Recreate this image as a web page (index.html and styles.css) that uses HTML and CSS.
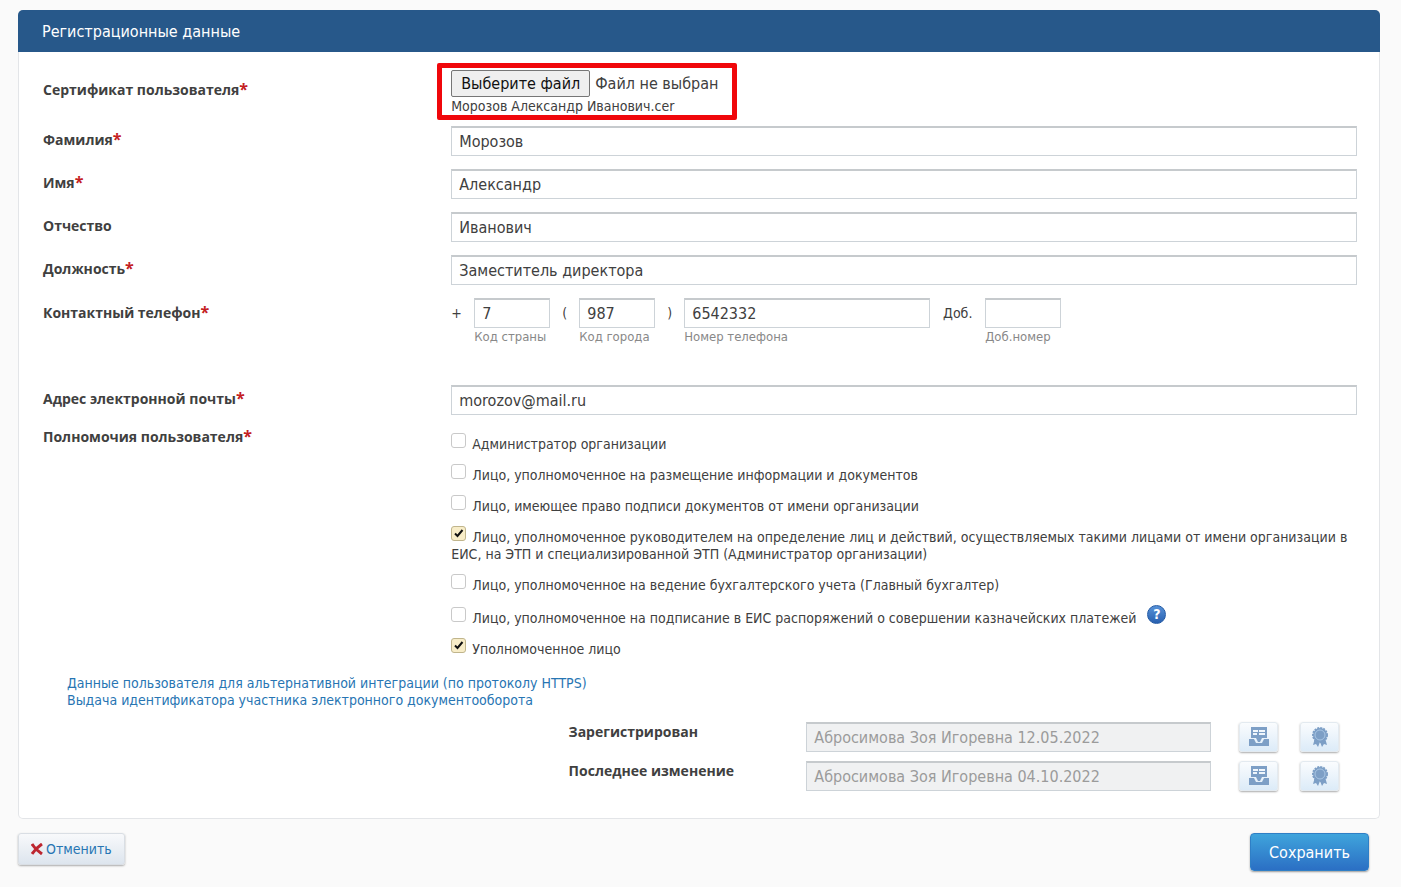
FILE: index.html
```html
<!DOCTYPE html>
<html lang="ru">
<head>
<meta charset="utf-8">
<title>Регистрационные данные</title>
<link rel="stylesheet" href="styles.css">
</head>
<body>
<svg class="sprite" aria-hidden="true">
  <symbol id="tray" viewBox="0 0 20 20">
    <path fill-rule="evenodd" d="M2 0h16v11H2zM4 3v2h5V3zM10 3v2h6V3zM4 6v2h4V6zM10 6v2h6V6z"/>
    <path d="M0 12h5l2 4h6l2-4h5v7H0z"/>
    <path d="M7 11h6l-2 4H9z"/>
  </symbol>
  <symbol id="award" viewBox="0 0 20 20">
    <path d="M5 11 3 18l3-1 2 3 2-5 2 5 2-3 3 1-2-7z"/>
    <circle cx="10" cy="8" r="7" stroke="currentColor" stroke-width="2" stroke-dasharray="2 1"/>
    <circle cx="10" cy="8" r="5" fill="none" stroke="#a9c6e4"/>
  </symbol>
</svg>
<form class="page">
  <section class="panel">
    <h1 class="panel-title">Регистрационные данные</h1>
    <div class="panel-body">
      <div class="row row-file">
        <label class="label" for="cert">Сертификат пользователя<span class="req">*</span></label>
        <div class="file-box">
          <div class="file-line">
            <input class="file-input" id="cert" type="file">
            <label class="file-button" for="cert">Выберите файл</label>
            <span class="file-status">Файл не выбран</span>
          </div>
          <div class="file-name">Морозов Александр Иванович.cer</div>
        </div>
      </div>
      <div class="row">
        <label class="label" for="surname">Фамилия<span class="req">*</span></label>
        <input class="field" id="surname" type="text" value="Морозов">
      </div>
      <div class="row">
        <label class="label" for="name">Имя<span class="req">*</span></label>
        <input class="field" id="name" type="text" value="Александр">
      </div>
      <div class="row">
        <label class="label" for="patronymic">Отчество</label>
        <input class="field" id="patronymic" type="text" value="Иванович">
      </div>
      <div class="row">
        <label class="label" for="position">Должность<span class="req">*</span></label>
        <input class="field" id="position" type="text" value="Заместитель директора">
      </div>
      <div class="row row-phone">
        <div class="label">Контактный телефон<span class="req">*</span></div>
        <div class="phone">
          <span class="sign">+</span>
          <div class="part"><input class="field" id="country" type="text" value="7"><label class="hint" for="country">Код страны</label></div>
          <span class="sign sign-mid">(</span>
          <div class="part"><input class="field" id="city" type="text" value="987"><label class="hint" for="city">Код города</label></div>
          <span class="sign sign-mid">)</span>
          <div class="part part-wide"><input class="field" id="phone" type="text" value="6542332"><label class="hint" for="phone">Номер телефона</label></div>
          <span class="sign sign-ext">Доб.</span>
          <div class="part"><input class="field" id="ext" type="text"><label class="hint" for="ext">Доб.номер</label></div>
        </div>
      </div>
      <div class="row">
        <label class="label" for="email">Адрес электронной почты<span class="req">*</span></label>
        <input class="field" id="email" type="text" value="morozov@mail.ru">
      </div>
      <div class="row row-rights">
        <div class="label">Полномочия пользователя<span class="req">*</span></div>
        <div class="rights">
          <div><input class="check" type="checkbox" id="r1"><label for="r1">Администратор организации</label></div>
          <div><input class="check" type="checkbox" id="r2"><label for="r2">Лицо, уполномоченное на размещение информации и документов</label></div>
          <div><input class="check" type="checkbox" id="r3"><label for="r3">Лицо, имеющее право подписи документов от имени организации</label></div>
          <div><input class="check" type="checkbox" id="r4" checked><label for="r4">Лицо, уполномоченное руководителем на определение лиц и действий, осуществляемых такими лицами от имени организации в ЕИС, на ЭТП и специализированной ЭТП (Администратор организации)</label></div>
          <div><input class="check" type="checkbox" id="r5"><label for="r5">Лицо, уполномоченное на ведение бухгалтерского учета (Главный бухгалтер)</label></div>
          <div class="with-help"><input class="check" type="checkbox" id="r6"><label for="r6">Лицо, уполномоченное на подписание в ЕИС распоряжений о совершении казначейских платежей</label><button class="help" type="button">?</button></div>
          <div><input class="check" type="checkbox" id="r7" checked><label for="r7">Уполномоченное лицо</label></div>
        </div>
      </div>
      <nav class="links">
        <a href="#https">Данные пользователя для альтернативной интеграции (по протоколу HTTPS)</a>
        <a href="#edo">Выдача идентификатора участника электронного документооборота</a>
      </nav>
      <div class="audit">
        <label class="label" for="created">Зарегистрирован</label>
        <input class="field" id="created" type="text" value="Абросимова Зоя Игоревна 12.05.2022" disabled>
        <button class="icon-button" type="button" aria-label="Журнал"><svg class="icon"><use href="#tray"/></svg></button>
        <button class="icon-button" type="button" aria-label="Подпись"><svg class="icon"><use href="#award"/></svg></button>
        <label class="label" for="changed">Последнее изменение</label>
        <input class="field" id="changed" type="text" value="Абросимова Зоя Игоревна 04.10.2022" disabled>
        <button class="icon-button" type="button" aria-label="Журнал"><svg class="icon"><use href="#tray"/></svg></button>
        <button class="icon-button" type="button" aria-label="Подпись"><svg class="icon"><use href="#award"/></svg></button>
      </div>
    </div>
  </section>
  <div class="actions">
    <button class="cancel" type="button"><svg class="cross" viewBox="0 0 12 12"><path d="M1 1q3 5 10 10M11 1Q5 5 1 11"/></svg>Отменить</button>
    <button class="save" type="submit">Сохранить</button>
  </div>
</form>
</body>
</html>
```
FILE: styles.css
```css
* { box-sizing: border-box; }
body {
  margin: 0;
  background: #fafafa;
  color: #404040;
  font: 14px/17px "DejaVu Sans Condensed", "Open Sans", sans-serif;
}
button, input { font: inherit; }
.sprite { position: absolute; width: 0; height: 0; }

.page { padding: 10px 21px 16px 18px; }
.panel {
  background: #fff;
  border: 1px solid #e3e5e8;
  border-top: 0;
  border-radius: 5px;
}
.panel-title {
  margin: 0 -1px;
  padding: 11px 24px 9px;
  border-radius: 5px 5px 0 0;
  background: #27588a;
  color: #fff;
  font-size: 16px;
  line-height: 22px;
  font-weight: 400;
}
.panel-body { padding: 11px 22px 27px 24px; }

.row {
  display: grid;
  grid-template-columns: 32fr 71fr;
  align-items: center;
  margin-bottom: 13px;
}
.label {
  padding-bottom: 4px;
  font-family: "Open Sans", "Noto Sans", sans-serif;
  font-weight: 700;
}
.req { color: #c4201f; font-size: 16px; line-height: 1; }

.row-file { margin-bottom: 6px; }
.file-box {
  justify-self: start;
  margin-left: -14px;
  padding: 2px 14px 0 9px;
  border: 5px solid #f0070b;
  border-radius: 2px;
}
.file-line { display: flex; align-items: center; gap: 5px; font-size: 16px; }
.file-input { position: absolute; width: 1px; height: 1px; opacity: 0; }
.file-button {
  padding: 0 9px;
  border: 1px solid #767676;
  border-radius: 2px;
  background: #efefef;
  color: #111;
  line-height: 25px;
}
.file-name { line-height: 18px; }

.field {
  width: 100%;
  height: 30px;
  padding: 0 7px;
  border: 1px solid #cdd3d8;
  border-top: 2px solid #c6cacd;
  background: #fff;
  color: #404040;
  font-size: 16px;
}
.row-phone { align-items: start; margin-bottom: 39px; }
.row-phone .label { line-height: 30px; }
.phone { display: flex; }
.sign { width: 23px; line-height: 30px; }
.sign-mid { width: 29px; text-align: center; }
.sign-ext { width: 55px; text-align: center; }
.part { width: 76px; }
.part-wide { width: 246px; }
.hint {
  display: block;
  color: #888;
  font-size: 13px;
  line-height: 18px;
  white-space: nowrap;
}

.row-rights { align-items: start; margin: 0; }
.rights { display: grid; gap: 11px; padding-top: 5px; }
.check {
  appearance: none;
  width: 15px;
  height: 15px;
  margin: 0 6px 1px 0;
  border: 1px solid #c9c9c9;
  border-radius: 3px;
  background: #fff;
}
.check:checked {
  border-color: #c0b58c;
  background: #f8edc8 url("data:image/svg+xml,%3Csvg xmlns='http://www.w3.org/2000/svg' viewBox='0 0 13 13'%3E%3Cpath d='M3 6.5 5.5 9 10.5 3' fill='none' stroke='%23111' stroke-width='2'/%3E%3C/svg%3E");
}
.with-help { padding-top: 2px; }
.help {
  width: 19px;
  height: 19px;
  margin: -4px 0 -4px 11px;
  padding: 0;
  border: 1px solid #235aa4;
  border-radius: 50%;
  background: linear-gradient(#5792d8, #2860b0);
  color: #fff;
  font-weight: 700;
  line-height: 17px;
  vertical-align: 4px;
}

.links { display: grid; justify-items: start; padding: 17px 24px 0; }
.links a { color: #2775b3; text-decoration: none; }

.audit {
  display: grid;
  grid-template-columns: 37fr 63fr 67px 61px;
  gap: 9px 0;
  padding: 13px 18px 0 40%;
}
.audit .label { padding-top: 1px; }
.field:disabled { background: #f0f1f2; color: #9b9b9b; }
.icon-button {
  display: grid;
  place-items: center;
  justify-self: end;
  width: 39px;
  height: 30px;
  padding: 0;
  border: 1px solid #e3eaf0;
  border-radius: 3px;
  background: linear-gradient(#fafcfe, #dcebf8);
  box-shadow: 0 1px 2px #aaa;
}
.icon { width: 20px; height: 20px; fill: #7d9fc6; color: #7d9fc6; }

.actions {
  display: flex;
  justify-content: space-between;
  align-items: start;
  padding: 14px 11px 0 0;
}
.cancel {
  display: flex;
  align-items: center;
  gap: 3px;
  height: 32px;
  padding: 0 12px;
  border: 1px solid #d9dee4;
  border-radius: 3px;
  background: linear-gradient(#f8f9fb, #dde5ee);
  box-shadow: 0 1px 2px #aaa;
  color: #2775b3;
  font-size: 14px;
}
.cross { width: 12px; height: 12px; fill: none; stroke: #bd2630; stroke-width: 3; }
.save {
  height: 38px;
  padding: 0 18px;
  border: 1px solid #2f7fc6;
  border-radius: 4px;
  background: linear-gradient(#3fa4dc, #2b6fc4);
  box-shadow: 0 1px 2px #999;
  color: #fff;
  font-size: 16px;
}
```
